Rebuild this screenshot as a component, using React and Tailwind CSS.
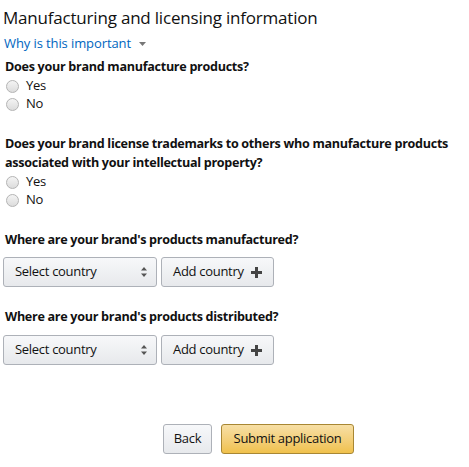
import React from 'react';

const Radio = ({ label }) => (
  <label className="flex items-center h-[18px]">
    <span className="ml-[6px] mr-[7px] h-[13px] w-[13px] rounded-full border border-[#b4b4b4] bg-gradient-to-b from-[#f4f4f4] to-[#dcdcdc]" />
    <span className="text-[13px] text-[#111]">{label}</span>
  </label>
);

const CountryRow = () => (
  <div className="flex gap-[4px] ml-[3px]">
    <div className="flex h-[30px] w-[154px] items-center justify-between rounded-[3px] border border-[#adb1b8] bg-gradient-to-b from-[#f7f8fa] to-[#e7e9ec] pl-[11px] pr-[9px]">
      <span className="text-[13px] text-[#111]">Select country</span>
      <svg width="6" height="10" viewBox="0 0 6 10" className="text-[#555]">
        <path d="M3 0 L6 3.5 H0 Z M3 10 L6 6.5 H0 Z" fill="currentColor" />
      </svg>
    </div>
    <div className="flex h-[30px] w-[113px] items-center rounded-[3px] border border-[#adb1b8] bg-gradient-to-b from-[#f7f8fa] to-[#e7e9ec] pl-[11px]">
      <span className="text-[13px] text-[#111]">Add country</span>
      <svg width="11" height="11" viewBox="0 0 11 11" className="ml-[7px] text-[#444]">
        <path d="M4 0 H7 V4 H11 V7 H7 V11 H4 V7 H0 V4 H4 Z" fill="currentColor" />
      </svg>
    </div>
  </div>
);

export default function App() {
  return (
    <div className="w-[469px] h-[467px] bg-white font-['Open_Sans',sans-serif] text-[#111] tracking-[-0.3px]">
      <div className="pt-[6px]">
        <h1 className="ml-[3px] text-[17px] leading-[24px] font-normal tracking-[-0.2px]">Manufacturing and licensing information</h1>
        <div className="ml-[4px] mt-[5px] flex items-center h-[18px] text-[13px] text-[#0066c0] tracking-[-0.1px]">
          <span>Why is this important</span>
          <svg width="7" height="4" viewBox="0 0 7 4" className="ml-[8px] text-[#777]">
            <path d="M0 0 H7 L3.5 4 Z" fill="currentColor" />
          </svg>
        </div>
        <p className="ml-[5px] mt-[4px] h-[19px] text-[12.6px] font-bold leading-[19px]">Does your brand manufacture products?</p>
        <div className="mt-[1px]">
          <Radio label="Yes" />
          <Radio label="No" />
        </div>
        <p className="ml-[5px] mt-[21px] text-[12.6px] font-bold leading-[19px]">
          Does your brand license trademarks to others who manufacture products associated with your intellectual property?
        </p>
        <div className="mt-[1px]">
          <Radio label="Yes" />
          <Radio label="No" />
        </div>
        <p className="ml-[5px] mt-[21px] text-[12.6px] font-bold leading-[19px]">Where are your brand's products manufactured?</p>
        <div className="mt-[8px]">
          <CountryRow />
        </div>
        <p className="ml-[5px] mt-[20px] text-[12.6px] font-bold leading-[19px]">Where are your brand's products distributed?</p>
        <div className="mt-[9px]">
          <CountryRow />
        </div>
        <div className="mt-[59px] flex ml-[163px] gap-[9px]">
          <button className="h-[30px] w-[49px] rounded-[3px] border border-[#adb1b8] bg-gradient-to-b from-[#f7f8fa] to-[#e7e9ec] text-[13px] text-[#111]">Back</button>
          <button className="h-[30px] w-[133px] rounded-[3px] border border-[#a88734] bg-gradient-to-b from-[#f7dfa5] to-[#f0c14b] text-[13px] text-[#111]">Submit application</button>
        </div>
      </div>
    </div>
  );
}
